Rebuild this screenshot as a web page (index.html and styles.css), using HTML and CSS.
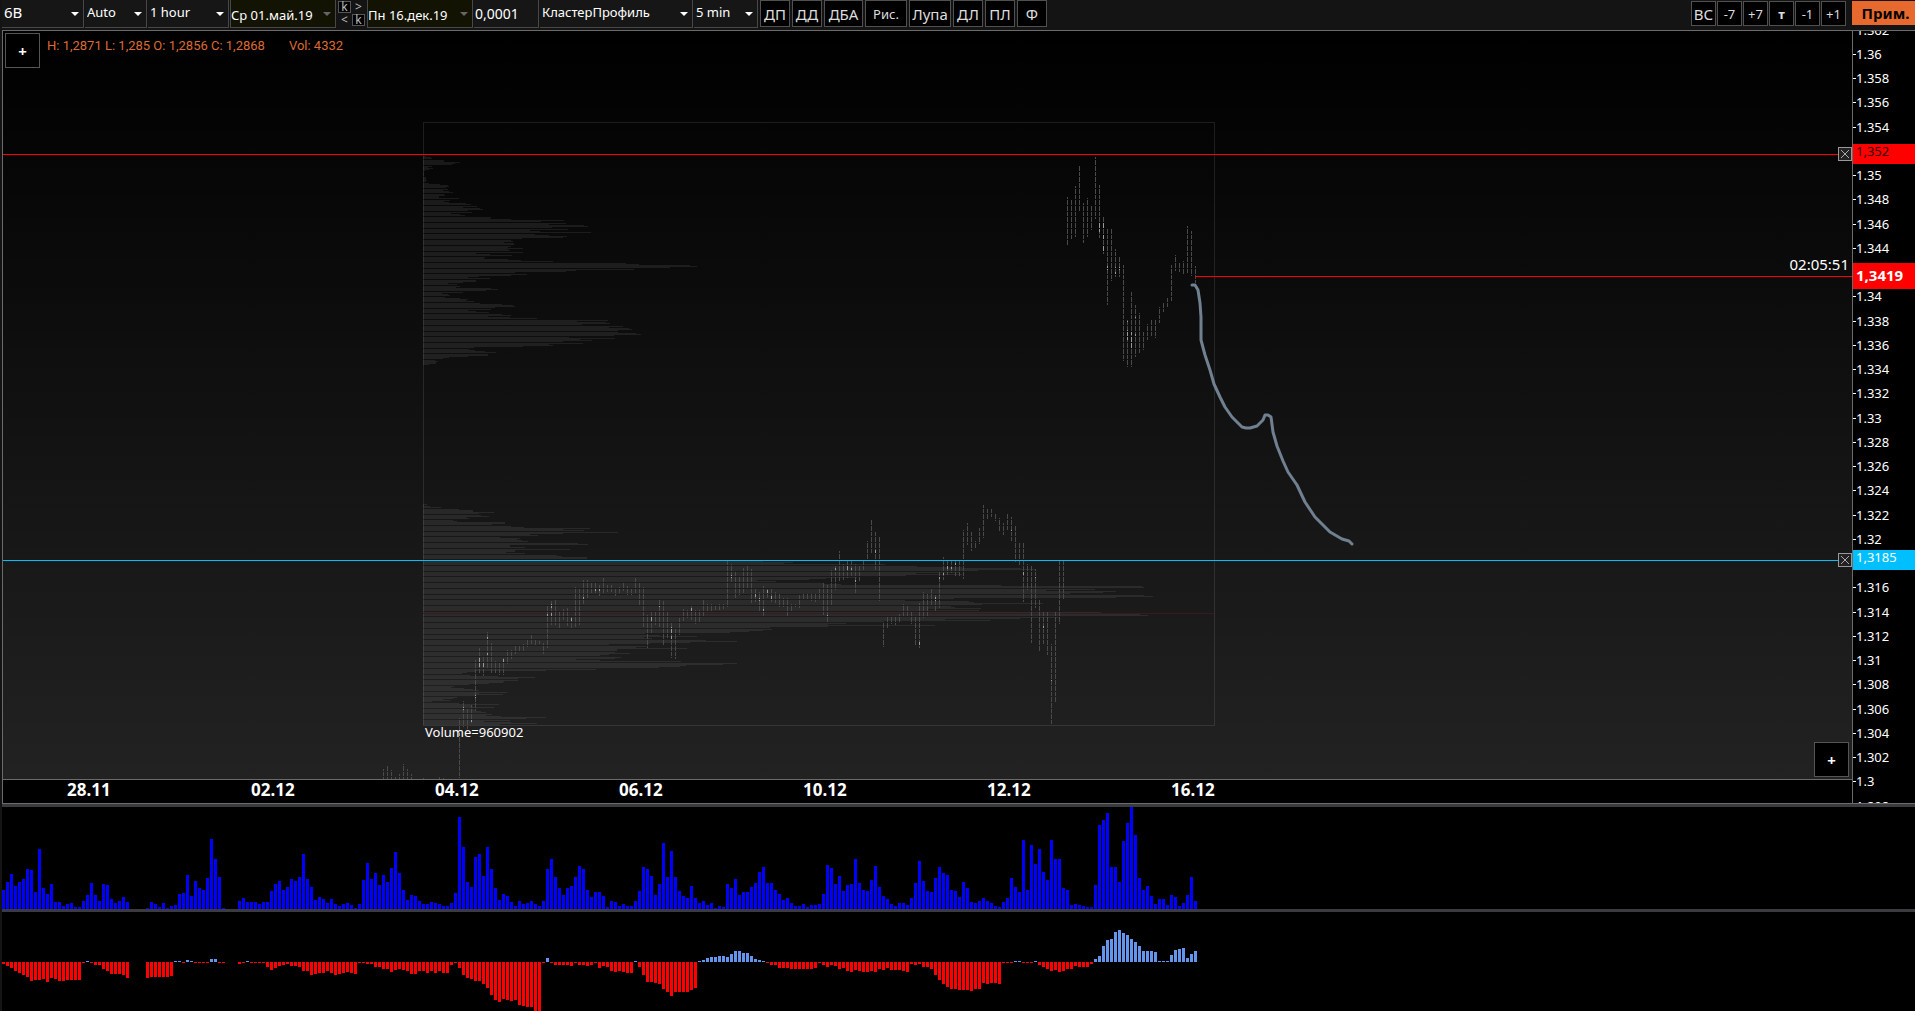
FILE: index.html
```html
<!DOCTYPE html>
<html lang="ru">
<head>
<meta charset="utf-8">
<title>6B — КластерПрофиль</title>
<link rel="stylesheet" href="styles.css">
</head>
<body>
<header class="toolbar">
  <label class="picker picker-symbol"><select aria-label="Инструмент"><option>6B</option></select></label>
  <label class="picker picker-scale"><select aria-label="Масштаб"><option>Auto</option></select></label>
  <label class="picker picker-period"><select aria-label="Период"><option>1 hour</option></select></label>
  <label class="picker picker-date"><select aria-label="Дата начала"><option>Ср 01.май.19</option></select></label>
  <div class="date-nav">
    <button type="button" class="key">k</button><button type="button">&gt;</button>
    <button type="button">&lt;</button><button type="button" class="key">k</button>
  </div>
  <label class="picker picker-date"><select aria-label="Дата конца"><option>Пн 16.дек.19</option></select></label>
  <input class="step" type="text" value="0,0001" aria-label="Шаг цены">
  <label class="picker picker-mode"><select aria-label="Режим"><option>КластерПрофиль</option></select></label>
  <label class="picker picker-detail"><select aria-label="Детализация"><option>5 min</option></select></label>
  <nav class="tools">
    <button type="button" class="w-s">ДП</button>
    <button type="button" class="w-s">ДД</button>
    <button type="button" class="w-m">ДБА</button>
    <button type="button" class="w-l small">Рис.</button>
    <button type="button" class="w-l">Лупа</button>
    <button type="button" class="w-s">ДЛ</button>
    <button type="button" class="w-s">ПЛ</button>
    <button type="button" class="w-s">Ф</button>
  </nav>
  <nav class="shifts">
    <button type="button" class="big">ВС</button>
    <button type="button">-7</button>
    <button type="button">+7</button>
    <button type="button" class="strong">т</button>
    <button type="button">-1</button>
    <button type="button">+1</button>
  </nav>
  <button type="button" class="apply">Прим.</button>
</header>

<main>
  <section class="chart">
    <div class="plot">
      <svg class="plot-canvas" id="plot" aria-label="Кластерный профиль"></svg>
      <button type="button" class="add add-top" aria-label="Добавить">+</button>
      <p class="quote"><span>H: 1,2871 L: 1,285 O: 1,2856 C: 1,2868</span><span>Vol: 4332</span></p>
      <time class="countdown">02:05:51</time>
      <button type="button" class="close close-high" aria-label="Удалить уровень 1,352"><svg viewBox="0 0 14 14"><path d="M3 3l8 8M11 3l-8 8"/></svg></button>
      <button type="button" class="close close-low" aria-label="Удалить уровень 1,3185"><svg viewBox="0 0 14 14"><path d="M3 3l8 8M11 3l-8 8"/></svg></button>
      <button type="button" class="add add-bottom" aria-label="Добавить">+</button>
    </div>
    <ol class="dates">
      <li>28.11</li><li>02.12</li><li>04.12</li><li>06.12</li><li>10.12</li><li>12.12</li><li>16.12</li>
    </ol>
    <aside class="prices">
      <svg class="price-scale" id="prices"></svg>
      <span class="tag tag-high">1,352</span>
      <span class="tag tag-last">1,3419</span>
      <span class="tag tag-low">1,3185</span>
    </aside>
  </section>
  <section class="pane volume"><svg id="volume" aria-label="Объём"></svg></section>
  <section class="pane delta"><svg id="delta" aria-label="Дельта"></svg></section>
</main>
<script src="chart.js"></script>
</body>
</html>
```
FILE: styles.css
```css
* { box-sizing: border-box; }

body {
  margin: 0;
  min-height: 100vh;
  display: flex;
  flex-direction: column;
  overflow: hidden;
  background: #141414;
  color: #fff;
  font: 13px/16px "Noto Sans", "Open Sans", sans-serif;
}

button, select, input {
  margin: 0;
  padding: 0;
  border: 0;
  border-radius: 0;
  background: none;
  color: inherit;
  font: inherit;
}

svg { display: block; }

/* Toolbar */
.toolbar {
  display: flex;
  align-items: flex-start;
  height: 30px;
  padding-left: 2px;
}

.picker {
  position: relative;
  height: 28px;
  margin-right: 1px;
  background: #161616;
  border-right: 1px solid #484848;
  border-bottom: 1px solid #484848;
}

.picker select {
  appearance: none;
  width: 100%;
  height: 24px;
  padding-left: 2px;
}

.picker::after {
  content: "";
  position: absolute;
  right: 4px;
  top: 12px;
  border: 4px solid transparent;
  border-top-color: #fff;
  border-bottom: 0;
  pointer-events: none;
}

.picker-symbol { width: 82px; font-size: 15px; }
.picker-scale { width: 62px; }
.picker-period { width: 81px; }
.picker-mode { width: 153px; }
.picker-detail { width: 64px; }

.picker-date {
  width: 106px;
  margin: 0;
  background: #131303;
  border-left: 1px solid #484848;
}
.picker-date select { height: 30px; padding-left: 0; }
.picker-date::after { border-top-color: #666; }

.date-nav {
  display: grid;
  grid-template-columns: 13px 13px;
  grid-template-rows: 12px 12px;
  gap: 1px;
  padding: 1px 2px;
  color: #bbb;
  font-size: 12px;
  line-height: 10px;
}
.date-nav .key { background: #000; border: 1px solid #555; }

.step {
  width: 65px;
  height: 28px;
  padding-left: 1px;
  margin: 0 1px;
  border-right: 1px solid #484848;
  border-bottom: 1px solid #484848;
  background: #161616;
  font-size: 14px;
}

.tools, .shifts { display: flex; gap: 2px; margin-left: 1px; }
.tools button, .shifts button {
  height: 27px;
  border: 1px solid #505050;
  background: #000;
  color: #ddd;
  font-size: 15px;
  line-height: 24px;
}
.tools .small { font-size: 13px; }
.w-s { width: 30px; }
.w-m { width: 39px; }
.w-l { width: 42px; }

.shifts { gap: 1px; margin: 1px 6px 0 auto; }
.shifts button { width: 25px; height: 25px; font-size: 13px; line-height: 22px; }
.shifts .big { font-size: 15px; }
.shifts .strong { font-weight: 700; }

.apply {
  width: 63px;
  height: 24px;
  margin-top: 1px;
  padding-left: 4px;
  background: #e8692d;
  color: #000;
  font-size: 15px;
  font-weight: 700;
}

/* Price chart */
main {
  flex: 1;
  display: flex;
  flex-direction: column;
  margin-left: 2px;
}

.chart {
  display: grid;
  grid-template-columns: 1fr 63px;
  border: 1px solid #6b6b6b;
  border-right: 0;
  background: #000;
}

.plot {
  position: relative;
  border-bottom: 1px solid #6b6b6b;
  background: linear-gradient(#000, #222);
}

.plot-canvas { width: 100%; height: 748px; }

.add {
  position: absolute;
  width: 35px;
  height: 35px;
  border: 1px solid #555;
  background: #000;
  font-size: 15px;
  font-weight: 700;
}
.add-top { left: 2px; top: 2px; }
.add-bottom { right: 3px; bottom: 2px; }

.quote {
  position: absolute;
  left: 44px;
  top: 7px;
  display: flex;
  gap: 24px;
  margin: 0;
  color: #dc6a32;
  font-family: Roboto, sans-serif;
  font-size: 13px;
}

.countdown {
  position: absolute;
  right: 3px;
  top: 225px;
  font-size: 15px;
}

.close {
  position: absolute;
  right: 0;
  width: 14px;
  height: 14px;
  background: #222;
  outline: 1px solid #999;
  outline-offset: -1px;
}
.close path { stroke: #aaa; fill: none; }
.close-high { top: 116px; }
.close-low { top: 522px; }

.dates {
  display: flex;
  margin: 0;
  padding: 2px 0 5px 64px;
  list-style: none;
  font-size: 17px;
  font-weight: 700;
}
.dates li { width: 184px; }

.prices {
  position: relative;
  grid-column: 2;
  grid-row: 1 / 3;
  border-left: 1px solid #6b6b6b;
}
.price-scale { position: absolute; width: 100%; height: 100%; }
.price-scale text { fill: #fff; }
.price-scale path { stroke: #fff; }

.tag {
  position: absolute;
  left: 0;
  width: 100%;
  height: 20px;
  padding-left: 3px;
  line-height: 14px;
}
.tag-high { top: 113px; background: #f00; color: #300; }
.tag-low { top: 519px; background: #00bfff; }
.tag-last {
  top: 232px;
  height: 26px;
  background: #f00;
  font-size: 15px;
  font-weight: 700;
  line-height: 24px;
}

.profile { fill: #fff; fill-opacity: .08; }
.frame { fill: none; stroke: #fff; stroke-opacity: .1; }
.poc { fill: #381b1b; }
.candles { fill: #4a4a4a; }
.dense { fill: #999; }
.level-red { fill: #f00; }
.level-blue { fill: #00bfff; }
.sketch { fill: none; stroke: #708090; stroke-width: 3; stroke-linecap: round; stroke-linejoin: round; }
.note { fill: #fff; }

/* Histograms */
.pane { border-top: 3px solid #3b3a3f; background: #000; }
.pane svg { width: 100%; height: 102px; }
.delta { flex: 1; }
.delta svg { height: 99px; }
.bar-volume { fill: #00f; }
.bar-up { fill: #6495ed; }
.bar-down { fill: #f00; }
```
FILE: chart.js
```javascript
const STEP = 4;

const volume = [19,27,35,23,27,30,40,39,17,60,21,15,25,7,7,3,5,6,2,2,8,14,26,14,8,25,24,10,6,8,12,7,0,0,0,0,1,7,5,2,6,1,3,4,15,16,34,13,28,21,19,31,70,50,32,1,0,0,0,8,11,7,7,7,5,7,7,18,25,28,19,22,30,28,32,55,30,22,9,12,10,6,10,5,3,5,6,4,1,5,29,46,30,36,24,34,27,41,57,36,19,9,14,13,8,5,5,7,6,5,3,3,6,16,92,62,27,22,52,55,33,62,40,21,9,15,13,7,3,8,5,6,8,5,3,8,40,50,32,21,14,21,23,32,43,40,19,12,17,17,13,2,8,7,3,5,3,3,8,18,42,40,33,14,25,66,32,58,32,18,13,11,23,11,6,8,4,6,1,3,2,25,21,30,14,17,17,22,26,37,42,26,26,19,15,9,11,6,3,3,5,2,4,4,5,15,44,41,25,33,18,24,25,50,26,19,18,29,43,22,13,10,5,3,6,6,4,11,26,48,28,18,17,31,42,36,34,19,18,12,27,21,7,6,8,11,8,6,3,2,7,11,31,22,17,69,19,64,45,60,37,29,69,50,50,21,19,4,5,4,3,2,2,24,84,89,96,42,42,27,68,86,102,74,31,19,23,13,5,10,10,4,14,12,3,6,14,32,8];

const delta = [-2,-4,-6,-9,-11,-13,-15,-19,-18,-18,-17,-20,-16,-17,-19,-19,-18,-18,-18,-18,-1,1,-1,-3,-3,-7,-9,-12,-12,-12,-13,-16,0,0,0,0,-16,-15,-15,-15,-15,-15,-14,1,1,-1,2,1,-1,-1,-1,-1,3,3,-1,-1,0,0,0,-2,-1,1,-1,-1,-1,-1,-5,-8,-6,-4,-3,-2,-4,-4,-5,-9,-9,-13,-12,-11,-11,-9,-11,-13,-12,-11,-10,-11,-12,-1,-1,-2,-2,-5,-5,-7,-7,-10,-8,-7,-8,-9,-12,-12,-9,-9,-11,-9,-11,-9,-11,-11,-3,-1,-6,-13,-16,-17,-19,-19,-22,-26,-33,-38,-40,-37,-38,-39,-38,-43,-44,-45,-45,-49,-49,-1,4,-1,-3,-3,-3,-3,-4,-1,-3,-3,-4,-3,-1,-6,-4,-5,-9,-10,-9,-10,-11,-11,1,-5,-13,-20,-20,-21,-22,-27,-30,-34,-30,-30,-30,-30,-28,-26,1,2,4,5,5,6,6,5,8,11,11,9,9,6,3,2,1,-1,-3,-3,-6,-6,-6,-7,-7,-7,-7,-7,-7,-6,-1,-3,-5,-3,-4,-7,-6,-9,-10,-8,-9,-10,-10,-9,-10,-7,-8,-6,-8,-8,-8,-9,-10,-2,-3,-2,-5,-5,-7,-13,-18,-22,-25,-27,-27,-28,-28,-28,-29,-27,-27,-21,-22,-21,-21,-22,-1,-1,-1,1,1,-1,-1,-1,1,-3,-5,-7,-9,-8,-10,-9,-7,-7,-4,-5,-5,-5,-2,3,6,16,22,23,30,32,29,27,23,20,16,11,11,11,10,1,1,1,7,12,13,14,4,8,11];

// One entry per pixel row; zero rows separate the price steps.
const profileHigh = [3,8,9,0,21,21,37,32,29,0,9,5,10,6,2,0,1,1,1,1,0,3,3,3,4,3,0,6,17,25,26,23,0,25,20,26,30,0,21,22,16,16,36,0,27,21,26,43,48,0,54,40,57,60,45,0,49,28,37,42,0,68,67,88,141,118,0,143,126,161,165,129,0,145,107,117,168,0,112,126,144,140,99,0,88,90,81,91,91,0,88,85,100,85,87,0,100,53,67,89,0,62,61,85,98,130,0,203,216,267,274,247,0,211,153,143,92,0,104,88,56,45,67,0,53,53,40,25,34,0,37,33,68,75,63,0,40,19,25,27,0,22,37,45,43,51,0,57,79,90,92,72,0,68,45,53,66,0,79,88,65,87,114,0,185,154,183,187,159,0,200,186,206,209,195,0,195,213,218,191,0,146,192,157,169,140,0,160,126,130,100,51,0,46,52,62,73,0,65,65,45,26,20,0,12,15,13,13,6];
const profileLow = [4,1,7,18,0,36,50,50,71,56,0,58,66,43,46,0,30,34,82,82,69,0,88,101,167,140,161,0,195,140,107,115,0,77,97,94,99,105,0,155,165,87,87,102,0,147,92,92,83,102,0,134,139,164,164,0,330,340,370,361,462,0,494,539,598,612,555,0,537,493,539,483,0,434,403,386,334,353,0,400,418,578,719,721,0,672,623,693,680,647,0,721,730,693,531,0,482,546,551,620,559,0,528,532,558,504,556,0,678,717,717,725,0,637,597,522,567,461,0,423,405,512,405,347,0,349,340,326,307,222,0,237,274,221,229,0,283,314,267,227,186,0,223,213,264,194,194,0,192,207,186,177,0,198,192,153,177,258,0,314,300,263,257,236,0,173,123,53,44,39,0,47,75,112,95,0,95,81,80,66,46,0,31,28,41,50,56,0,84,56,80,52,0,34,30,20,27,9,0,36,76,49,50,71,0,51,53,58,63,0,69,63,78,123,103,0,87,61,88,114,77];

// [bar index, top, bottom]
const candles = [
[95,738,748],[96,735,748],[97,739,748],[98,745,748],[99,743,748],[100,733,748],[101,738,748],[102,743,748],[105,747,748],[109,745,748],[110,747,748],
[114,687,747],[115,670,696],[116,678,698],[117,674,692],[118,629,680],[119,617,643],[120,626,645],[121,601,637],[122,612,643],[123,630,643],[124,632,644],[125,627,644],[126,619,633],[127,619,628],[128,614,623],[129,614,621],[130,613,621],[131,609,616],[132,604,613],[133,609,615],[134,610,613],[135,612,623],[136,575,617],[137,570,594],[138,569,594],[139,581,598],[140,578,589],[141,577,595],[142,585,598],[143,556,596],[144,557,594],[145,549,573],[146,549,567],[147,552,563],[148,552,563],[149,554,565],[150,547,562],[151,554,561],[152,554,561],[153,557,565],[154,556,562],[155,552,560],[156,555,564],[157,558,564],[158,547,563],[159,551,574],
[160,556,596],[161,584,617],[162,580,602],[163,581,594],[164,568,596],[165,570,615],[166,581,607],[167,591,627],[168,597,628],[169,587,604],[170,578,590],[171,579,587],[172,575,589],[173,579,593],[174,579,591],[175,568,585],[176,573,581],[177,573,581],[178,575,579],[179,573,579],[180,573,578],[181,530,576],[182,533,551],[183,541,567],[184,546,564],[185,537,563],[186,535,558],[187,538,572],[188,557,571],[189,561,580],[190,555,586],[191,558,567],[192,558,571],[193,561,572],[194,562,576],[195,567,576],[196,567,585],[197,573,581],[198,573,576],[199,564,577],[200,562,569],[201,562,569],[202,563,570],[203,563,571],[204,558,569],[205,551,584],[206,554,591],[207,539,574],[208,534,559],[209,520,550],[210,533,549],[211,530,547],[212,530,546],[213,533,563],[214,534,550],[215,528,539],[216,510,529],[217,489,523],[218,500,539],[219,505,570],
[220,592,616],[221,586,598],[222,586,593],[223,586,594],[224,583,592],[225,573,586],[226,574,586],[227,580,593],[228,586,615],[229,572,617],[230,561,587],[231,562,586],[232,557,574],[233,564,580],[234,540,577],[235,526,549],[236,528,544],[237,530,542],[238,530,546],[239,528,546],[240,499,548],[241,492,514],[242,500,520],[243,510,518],[244,497,513],[245,474,507],[246,478,489],[247,477,486],[248,482,490],[249,487,500],[250,492,504],[251,482,499],[252,486,510],[253,494,531],[254,511,534],[255,512,571],[256,533,559],[257,535,612],[258,538,577],[259,568,621],[260,580,613],[261,581,624],[262,613,693],[263,581,672],[264,528,593],[265,530,569],
[266,166,215],[267,169,208],[268,155,206],[269,135,180],[270,172,212],[271,167,206],[272,174,199],[273,126,188],[274,154,207],[275,186,223],[276,197,274],[277,198,250],[278,218,246],[279,226,246],[280,234,330],[281,288,336],[282,261,336],[283,274,326],[284,282,322],[285,300,319],[286,293,309],[287,289,305],[288,288,307],[289,276,292],[290,272,281],[291,267,276],[292,234,270],[293,224,240],[294,232,241],[295,230,243],[296,195,242],[297,200,245],[298,235,252]];

// High-volume clusters: [bar index, top, bottom]
const dense = [[274,192,201],[275,191,198],[275,203,208],[275,215,221],[276,235,239],[278,236,238],[278,241,243],[279,236,239],[281,290,291],[281,299,309],[282,301,304],[282,306,317],[283,286,287],[283,303,306],[284,294,295],[119,627,636],[120,632,636],[121,606,608],[121,622,624],[118,664,667],[117,688,691],[115,676,679],[114,702,705],[125,628,631],[136,583,586],[137,573,577],[137,582,585],[145,566,569],[148,557,560],[149,558,560],[142,587,590],[162,586,590],[164,574,576],[167,596,602],[167,605,608],[172,577,580],[182,544,547],[188,562,566],[189,567,570],[190,578,580],[191,559,563],[192,565,568],[206,584,586],[208,537,539],[211,535,539],[212,537,539],[213,549,551],[218,519,522],[229,611,614],[233,566,570],[235,542,544],[236,534,538],[237,536,538],[238,532,534],[234,545,548],[252,499,501],[255,541,544],[258,545,547],[260,595,597],[262,648,650]];

const breaks = new Set();
for (let i = -10; i < 120; i++) breaks.add(Math.round(128.3 + i * 5.7125));

function add(svg, tag, attrs, text) {
  const el = document.createElementNS("http://www.w3.org/2000/svg", tag);
  for (const key in attrs) el.setAttribute(key, attrs[key]);
  if (text) el.textContent = text;
  svg.appendChild(el);
}

const box = (x, y, w, h) => `M${x} ${y}h${w}v${h}h${-w}z`;

function columns(list) {
  let d = "";
  for (const [k, top, bottom] of list) {
    let start = top;
    for (let y = top; y <= bottom; y++) {
      if (y === bottom || breaks.has(y)) {
        if (y > start) d += box(k * STEP, start, 1, y - start);
        start = y + 1;
      }
    }
  }
  return d;
}

const rows = (list, top) => list.map((w, i) => w ? box(420, top + i, w, 1) : "").join("");

const plot = document.getElementById("plot");
add(plot, "path", { class: "profile", d: rows(profileHigh, 125) + rows(profileLow, 473) });
add(plot, "rect", { class: "frame", x: 420.5, y: 91.5, width: 791, height: 603 });
add(plot, "rect", { class: "poc", x: 420, y: 582, width: 791, height: 1 });
add(plot, "path", { class: "candles", d: columns(candles) });
add(plot, "path", { class: "dense", d: columns(dense) });
add(plot, "rect", { class: "level-red", x: 0, y: 123, width: "100%", height: 1 });
add(plot, "rect", { class: "level-red", x: 1192, y: 245, width: "100%", height: 1 });
add(plot, "rect", { class: "level-blue", x: 0, y: 529, width: "100%", height: 1 });
add(plot, "polyline", { class: "sketch", points: "1189,254 1192,254 1195,259 1197,272 1198,286 1198,309 1202,324 1207,339 1211,353 1217,366 1222,376 1229,386 1239,396 1243,397 1247,397 1254,395 1260,389 1262,384 1265,384 1268,386 1270,401 1274,415 1280,430 1285,441 1294,454 1302,471 1312,486 1327,501 1339,508 1346,510 1349,513" });
add(plot, "text", { class: "note", x: 422, y: 706 }, "Volume=960902");

// Labels that a price tag would cover are left out.
const tagged = ["1.352", "1.342", "1.318"];
const prices = document.getElementById("prices");
for (let i = 0; i <= 32; i++) {
  const y = Math.floor(-1 + i * 24.25);
  const label = String(Number((1.362 - i * 0.002).toFixed(3)));
  if (tagged.includes(label)) continue;
  add(prices, "path", { d: `M0 ${y + .5}h3` });
  add(prices, "text", { x: 3, y: y + 5 }, label);
}

const bars = (list, base) => list.map((v, i) => v ? box(i * STEP, v > 0 ? base - v : base, 3, Math.abs(v)) : "").join("");
add(document.getElementById("volume"), "path", { class: "bar-volume", d: bars(volume, 102) });
const deltaSvg = document.getElementById("delta");
add(deltaSvg, "path", { class: "bar-up", d: bars(delta.map(v => Math.max(v, 0)), 50) });
add(deltaSvg, "path", { class: "bar-down", d: bars(delta.map(v => Math.min(v, 0)), 50) });
```
